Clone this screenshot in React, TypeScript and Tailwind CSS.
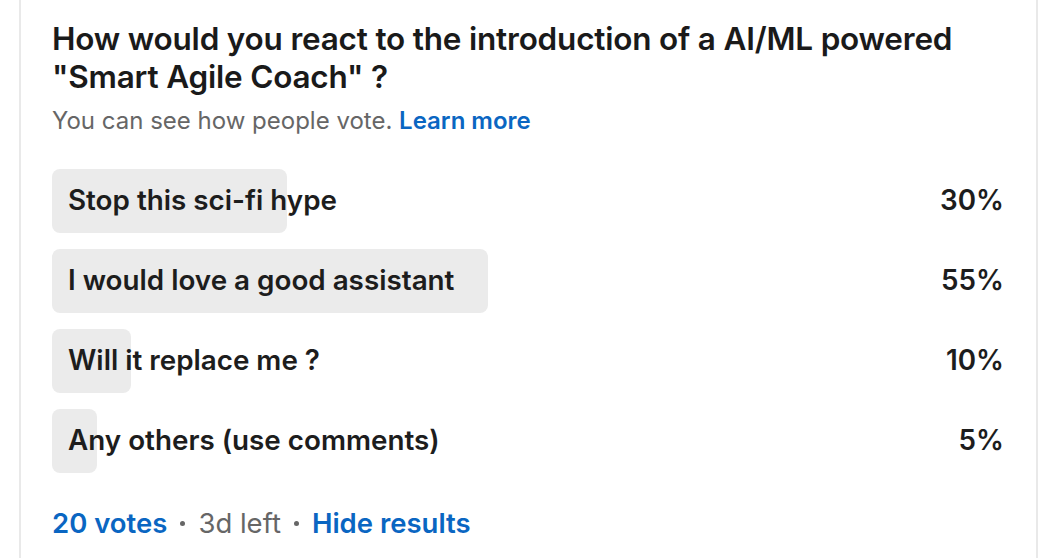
import React from "react";

const options = [
  { label: "Stop this sci-fi hype", pct: 30, bar: 235 },
  { label: "I would love a good assistant", pct: 55, bar: 436 },
  { label: "Will it replace me ?", pct: 10, bar: 79 },
  { label: "Any others (use comments)", pct: 5, bar: 45 },
];

export default function App() {
  return (
    <div className="h-[558px] w-[1050px] overflow-hidden bg-white font-['Inter',sans-serif] antialiased">
      <div className="ml-[19px] h-full w-[1019px] border-x-2 border-[#e9e9e9] pl-[31px] pr-[32px] pt-[20px]">
        {/* Question */}
        <h2 className="text-[31.5px] font-semibold leading-[38px] tracking-[-0.2px] text-[#1a1a1a]">
          How would you react to the introduction of a AI/ML powered "Smart Agile Coach" ?
        </h2>
        <p className="mt-[9px] text-[24px] leading-[32px] text-[#666666]">
          You can see how people vote.{" "}
          <a className="font-semibold text-[#0a66c2]">Learn more</a>
        </p>

        {/* Options */}
        <div className="mt-[32px] flex flex-col gap-4">
          {options.map((o) => (
            <div key={o.label} className="relative flex h-16 items-center justify-between">
              <div
                className="absolute inset-y-0 left-0 rounded-lg bg-[#ebebeb]"
                style={{ width: o.bar }}
              />
              <span className="relative pl-4 text-[27.8px] font-semibold text-[#1d1d1d]">{o.label}</span>
              <span className="relative text-[27.8px] font-semibold text-[#1d1d1d]">{o.pct}%</span>
            </div>
          ))}
        </div>

        {/* Footer */}
        <div className="mt-[34px] flex items-center text-[27.5px] leading-[32px]">
          <span className="font-semibold text-[#0a66c2]">20 votes</span>
          <span className="mx-[13px] size-[5px] rounded-full bg-[#666666]" />
          <span className="text-[#666666]">3d left</span>
          <span className="mx-[13px] size-[5px] rounded-full bg-[#666666]" />
          <span className="font-semibold text-[#0a66c2]">Hide results</span>
        </div>
      </div>
    </div>
  );
}
